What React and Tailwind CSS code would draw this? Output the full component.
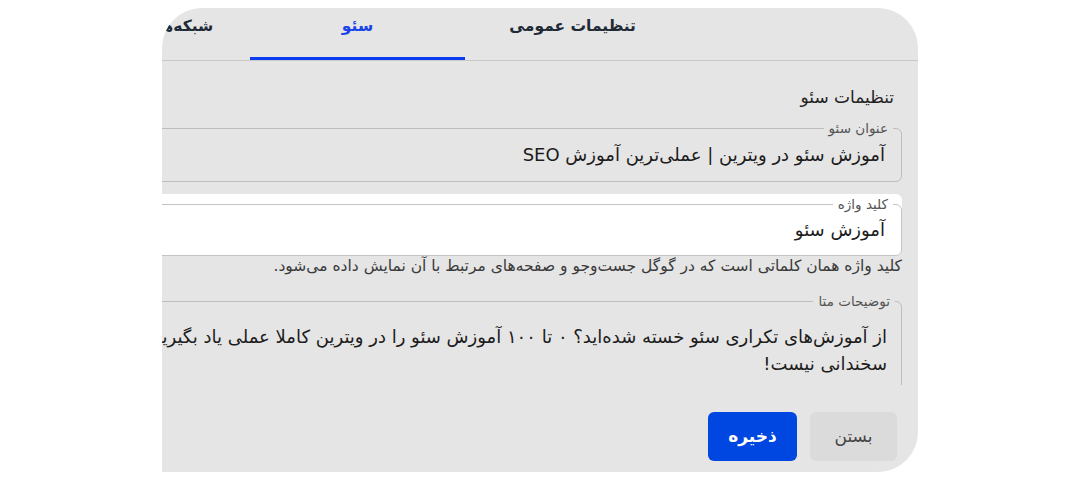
export default function App() {
  const tabs = [
    { label: "تنظیمات عمومی", active: false },
    { label: "سئو", active: true },
    { label: "شبکه‌های اجتماعی", active: false },
  ];

  return (
    <div className="w-[1080px] h-[480px] bg-white pt-[8px] pl-[162px]" style={{ fontFamily: '"DejaVu Sans", sans-serif' }}>
      <div
        dir="rtl"
        className="w-[756px] h-[464px] bg-[#e5e5e5] rounded-tl-[40px] rounded-tr-[40px] rounded-br-[40px] overflow-hidden flex flex-col"
      >
        {/* Tabs */}
        <div className="h-[53px] shrink-0 border-b border-[#c9c9c9] flex pr-[238px]">
          {tabs.map((t) => (
            <div
              key={t.label}
              className={
                "relative w-[215px] shrink-0 h-[52px] pb-[14px] flex items-center justify-center whitespace-nowrap text-[15.5px] font-bold " +
                (t.active ? "text-[#1a44e8]" : "text-[#1f2a37]")
              }
            >
              {t.label}
              {t.active && <span className="absolute bottom-0 inset-x-0 h-[3px] bg-[#0b3cf2]" />}
            </div>
          ))}
        </div>

        {/* Content */}
        <div className="h-[324px] shrink-0 overflow-hidden pr-[16px]">
          <div className="w-[1000px]">
            <div className="mt-[24px] pr-[8px] text-[17px] leading-[24px] text-[#222]">تنظیمات سئو</div>

            <fieldset className="mt-[12px] border border-[#bdbdbd] rounded-[6px] pr-[16px] pt-[7px] pb-[13px]">
              <legend className="-mr-2 px-[5px] text-[13.5px] leading-[14px] text-[#555]">عنوان سئو</legend>
              <div className="text-[18px] leading-[26px] text-[#1c1c1c] whitespace-nowrap">
                آموزش سئو در ویترین | عملی‌ترین آموزش SEO
              </div>
            </fieldset>

            <div className="mt-[12px] bg-white rounded-[6px] pt-[3px]">
              <fieldset className="border border-[#c4c4c4] rounded-[6px] pr-[16px] pt-[6px] pb-[12px]">
                <legend className="-mr-2 px-[5px] text-[13.5px] leading-[14px] text-[#555]">کلید واژه</legend>
                <div className="text-[18px] leading-[26px] text-[#1c1c1c] whitespace-nowrap">آموزش سئو</div>
              </fieldset>
            </div>

            <div className="text-[15.5px] leading-[20px] text-[#3a3a3a] whitespace-nowrap">
              کلید واژه همان کلماتی است که در گوگل جست‌وجو و صفحه‌های مرتبط با آن نمایش داده می‌شود.
            </div>

            <fieldset className="mt-[18px] border border-[#bdbdbd] rounded-[6px] pr-[14px] pt-[15px] pb-[20px]">
              <legend className="-mr-2 px-[5px] text-[13.5px] leading-[14px] text-[#555]">توضیحات متا</legend>
              <div className="text-[18px] leading-[27px] text-[#1c1c1c] whitespace-nowrap">
                از آموزش‌های تکراری سئو خسته شده‌اید؟ ۰ تا ۱۰۰ آموزش سئو را در ویترین کاملا عملی یاد بگیرید، اینجا جای
              </div>
              <div className="text-[18px] leading-[27px] text-[#1c1c1c] whitespace-nowrap">سخندانی نیست!</div>
            </fieldset>
          </div>
        </div>

        {/* Footer */}
        <div className="h-[87px] shrink-0 flex items-start gap-[13px] pr-[21px] pt-[27px]">
          <button className="w-[87px] h-[49px] rounded-[6px] bg-[#dbdbdb] text-[#444] text-[17px]">بستن</button>
          <button className="w-[89px] h-[49px] rounded-[6px] bg-[#0047e1] text-white text-[17px] font-bold">ذخیره</button>
        </div>
      </div>
    </div>
  );
}
